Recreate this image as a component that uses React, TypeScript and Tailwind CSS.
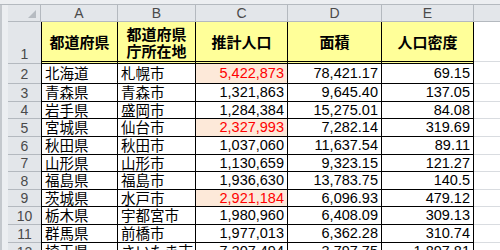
import React from "react";

type Row = { n: string; a: string; b: string; c: string; d: string; e: string; hl?: boolean; h: number };

const rows: Row[] = [
  { n: "2", a: "北海道", b: "札幌市", c: "5,422,873", d: "78,421.17", e: "69.15", hl: true, h: 20 },
  { n: "3", a: "青森県", b: "青森市", c: "1,321,863", d: "9,645.40", e: "137.05", h: 18 },
  { n: "4", a: "岩手県", b: "盛岡市", c: "1,284,384", d: "15,275.01", e: "84.08", h: 17 },
  { n: "5", a: "宮城県", b: "仙台市", c: "2,327,993", d: "7,282.14", e: "319.69", hl: true, h: 18 },
  { n: "6", a: "秋田県", b: "秋田市", c: "1,037,060", d: "11,637.54", e: "89.11", h: 18 },
  { n: "7", a: "山形県", b: "山形市", c: "1,130,659", d: "9,323.15", e: "121.27", h: 17 },
  { n: "8", a: "福島県", b: "福島市", c: "1,936,630", d: "13,783.75", e: "140.5", h: 18 },
  { n: "9", a: "茨城県", b: "水戸市", c: "2,921,184", d: "6,096.93", e: "479.12", hl: true, h: 17 },
  { n: "10", a: "栃木県", b: "宇都宮市", c: "1,980,960", d: "6,408.09", e: "309.13", h: 18 },
  { n: "11", a: "群馬県", b: "前橋市", c: "1,977,013", d: "6,362.28", e: "310.74", h: 18 },
  { n: "12", a: "埼玉県", b: "さいたま市", c: "7,207,494", d: "3,797.75", e: "1,897.81", h: 18 },
];

const jp = "font-['Noto_Sans_CJK_JP',sans-serif]";
const num = "font-['Liberation_Sans',Arial,sans-serif]";

function Frame() {
  return <div className="w-[8px] shrink-0 h-full border-l-2 border-[#c4c8cd] bg-[#eceef1]" />;
}

export default function App() {
  return (
    <div className="w-[500px] h-[250px] overflow-hidden bg-white">
      <div className="h-[5px] bg-[#eceef1] border-b border-[#b4b9bf]" />
      <div className="flex h-[17px]">
        <Frame />
        <div className="w-[33px] shrink-0 bg-[#e3e6ea] border-r border-b border-[#b4b9bf] relative">
          <svg className="absolute right-[4px] bottom-[3px]" width="8" height="8" viewBox="0 0 8 8">
            <polygon points="8,0 8,8 0,8" fill="#b6bbc1" />
          </svg>
        </div>
        {[
          ["A", "w-[77px]"],
          ["B", "w-[78px]"],
          ["C", "w-[92px]"],
          ["D", "w-[94px]"],
          ["E", "w-[92px]"],
        ].map(([l, w]) => (
          <div
            key={l}
            className={`${w} shrink-0 bg-[#e3e6ea] border-r border-b border-[#b4b9bf] flex items-center justify-center text-[14px] leading-none text-[#4a4a4a] ${num}`}
          >
            {l}
          </div>
        ))}
        <div className="flex-1 bg-[#e3e6ea] border-b border-[#b4b9bf]" />
      </div>
      <div className="flex h-[42px]">
        <Frame />
        <div className={`w-[33px] shrink-0 bg-[#e3e6ea] border-b border-[#b4b9bf] flex items-end justify-center pb-[2px] text-[14px] leading-none text-[#4a4a4a] ${num}`}>
          1
        </div>
        <div className={`w-[77px] shrink-0 bg-[#ffff99] border-l border-r border-black border-b-[3px] border-b-black border-double flex items-center justify-center font-bold text-[15px] leading-none text-black ${jp}`}>
          都道府県
        </div>
        <div className={`w-[78px] shrink-0 bg-[#ffff99] border-r border-black border-b-[3px] border-b-black border-double flex flex-col items-center justify-center gap-[2px] font-bold text-[15px] leading-none text-black ${jp}`}>
          <span>都道府県</span>
          <span>庁所在地</span>
        </div>
        <div className={`w-[92px] shrink-0 bg-[#ffff99] border-r border-black border-b-[3px] border-b-black border-double flex items-center justify-center font-bold text-[15px] leading-none text-black ${jp}`}>
          推計人口
        </div>
        <div className={`w-[94px] shrink-0 bg-[#ffff99] border-r border-black border-b-[3px] border-b-black border-double flex items-center justify-center font-bold text-[15px] leading-none text-black ${jp}`}>
          面積
        </div>
        <div className={`w-[92px] shrink-0 bg-[#ffff99] border-r border-black border-b-[3px] border-b-black border-double flex items-center justify-center font-bold text-[15px] leading-none text-black ${jp}`}>
          人口密度
        </div>
        <div className="flex-1 border-b border-[#d9dce0] mb-[2px]" />
      </div>
      {rows.map((r) => (
        <div key={r.n} className="flex" style={{ height: r.h }}>
          <Frame />
          <div className={`w-[33px] shrink-0 bg-[#e3e6ea] border-b border-[#b4b9bf] flex items-center justify-center text-[14px] leading-none text-[#4a4a4a] ${num}`}>
            {r.n}
          </div>
          <div className={`w-[77px] shrink-0 border-l border-r border-b border-black flex items-center pl-[3px] text-[14.5px] leading-none text-black whitespace-nowrap ${jp}`}>
            {r.a}
          </div>
          <div className={`w-[78px] shrink-0 border-r border-b border-black flex items-center pl-[3px] text-[14.5px] leading-none text-black whitespace-nowrap ${jp}`}>
            {r.b}
          </div>
          <div
            className={`w-[92px] shrink-0 border-r border-b border-black flex items-center justify-end pr-[3px] text-[14.5px] leading-none ${num} ${
              r.hl ? "bg-[#fde9d9] text-[#ff0000]" : "text-black"
            }`}
          >
            {r.c}
          </div>
          <div className={`w-[94px] shrink-0 border-r border-b border-black flex items-center justify-end pr-[3px] text-[14.5px] leading-none text-black ${num}`}>
            {r.d}
          </div>
          <div className={`w-[92px] shrink-0 border-r border-b border-black flex items-center justify-end pr-[3px] text-[14.5px] leading-none text-black ${num}`}>
            {r.e}
          </div>
          <div className="flex-1 border-b border-[#d9dce0]" />
        </div>
      ))}
    </div>
  );
}
